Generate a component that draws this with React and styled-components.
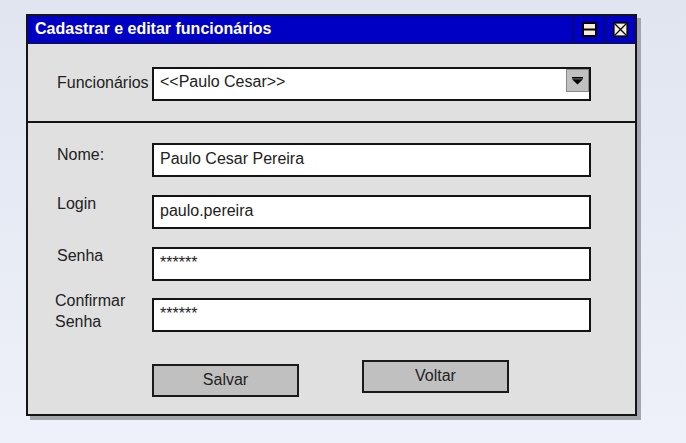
import React from "react";
import styled, { createGlobalStyle } from "styled-components";

const Global = createGlobalStyle`
  html, body { margin: 0; padding: 0; }
  body {
    width: 686px;
    height: 443px;
    overflow: hidden;
    background: linear-gradient(180deg, #e0e5f0 0%, #eef1f9 100%);
    font-family: "Liberation Sans", Arial, sans-serif;
  }
  * { box-sizing: border-box; }
`;

const Page = styled.div`
  padding: 14px 0 0 26px;
`;

const Window = styled.div`
  width: 611px;
  height: 402px;
  border: 2px solid #141414;
  background: #e0e0e0;
  box-shadow: 4px 4px 0 #a4a6ad;
  display: flex;
  flex-direction: column;
`;

const TitleBar = styled.div`
  height: 28px;
  flex-shrink: 0;
  background: #0000c4;
  border-bottom: 1px solid #141428;
  display: flex;
  align-items: stretch;
`;

const Title = styled.div`
  flex: 1;
  color: #fff;
  font-weight: bold;
  font-size: 16px;
  line-height: 26px;
  padding-left: 7px;
`;

const Control = styled.div`
  width: 31px;
  border-left: 1px solid #101030;
  display: flex;
  align-items: center;
  justify-content: center;
`;

const TopSection = styled.div`
  height: 79px;
  flex-shrink: 0;
  border-bottom: 2px solid #141414;
  display: flex;
  align-items: flex-start;
  padding: 23px 0 0 29px;
`;

const RowLabel = styled.div`
  width: 95px;
  flex-shrink: 0;
  font-size: 16px;
  color: #222;
  line-height: 18px;
  padding-top: ${(p) => p.$pt || 0}px;
`;

const ConfirmLabel = styled.div`
  width: 97px;
  flex-shrink: 0;
  margin-left: -2px;
  margin-top: -8px;
  font-size: 16px;
  color: #222;
  line-height: 21px;
`;

const Select = styled.div`
  position: relative;
  width: 439px;
  height: 34px;
  background: #fff;
  border: 2px solid #141414;
  font-size: 16px;
  color: #222;
  line-height: 18px;
  padding: 4px 0 0 6px;
`;

const DropButton = styled.div`
  position: absolute;
  top: 0;
  right: 0;
  width: 23px;
  height: 23px;
  background: #c0c0c0;
  border: 1px solid #8a8a8a;
  display: flex;
  align-items: center;
  justify-content: center;
`;

const Form = styled.div`
  flex: 1;
  padding: 20px 0 0 29px;
  display: flex;
  flex-direction: column;
`;

const FieldRow = styled.div`
  display: flex;
  align-items: flex-start;
  margin-bottom: ${(p) => p.$mb}px;
`;

const Field = styled.div`
  width: 439px;
  height: 34px;
  background: #fff;
  border: 2px solid #141414;
  font-size: 16px;
  color: #222;
  line-height: 18px;
  padding: 5px 0 0 6px;
`;

const Buttons = styled.div`
  display: flex;
  align-items: flex-start;
  gap: 63px;
  padding-left: 95px;
  margin-top: 32px;
`;

const Button = styled.div`
  width: 147px;
  height: 33px;
  background: #c0c0c0;
  border: 2px solid #1a1a1a;
  font-size: 16px;
  color: #222;
  line-height: 18px;
  text-align: center;
  padding-top: 5px;
  margin-top: ${(p) => p.$mt || 0}px;
`;

const RestoreIcon = () => (
  <svg width="15" height="15" viewBox="0 0 15 15">
    <rect x="1" y="1" width="13" height="13" fill="#fbeada" stroke="#000" strokeWidth="2" />
    <line x1="1" y1="7.5" x2="14" y2="7.5" stroke="#000" strokeWidth="2" />
  </svg>
);

const CloseIcon = () => (
  <svg width="15" height="15" viewBox="0 0 15 15">
    <rect x="0.8" y="0.8" width="13.4" height="13.4" fill="#f6ece0" stroke="#000" strokeWidth="1.6" />
    <line x1="1.5" y1="1.5" x2="13.5" y2="13.5" stroke="#000" strokeWidth="1.3" />
    <line x1="13.5" y1="1.5" x2="1.5" y2="13.5" stroke="#000" strokeWidth="1.3" />
  </svg>
);

const ArrowIcon = () => (
  <svg width="11" height="8" viewBox="0 0 11 8">
    <rect x="0" y="0" width="11" height="1.6" fill="#000" />
    <polygon points="0,2.2 11,2.2 5.5,7.5" fill="#000" />
  </svg>
);

export default function App() {
  return (
    <>
      <Global />
      <Page>
        <Window>
          <TitleBar>
            <Title>Cadastrar e editar funcionários</Title>
            <Control>
              <RestoreIcon />
            </Control>
            <Control>
              <CloseIcon />
            </Control>
          </TitleBar>
          <TopSection>
            <RowLabel $pt={7}>Funcionários</RowLabel>
            <Select>
              &lt;&lt;Paulo Cesar&gt;&gt;
              <DropButton>
                <ArrowIcon />
              </DropButton>
            </Select>
          </TopSection>
          <Form>
            <FieldRow $mb={18}>
              <RowLabel $pt={3}>Nome:</RowLabel>
              <Field>Paulo Cesar Pereira</Field>
            </FieldRow>
            <FieldRow $mb={18}>
              <RowLabel $pt={0}>Login</RowLabel>
              <Field>paulo.pereira</Field>
            </FieldRow>
            <FieldRow $mb={17}>
              <RowLabel $pt={-1}>Senha</RowLabel>
              <Field>******</Field>
            </FieldRow>
            <FieldRow $mb={0}>
              <ConfirmLabel>
                Confirmar
                <br />
                Senha
              </ConfirmLabel>
              <Field>******</Field>
            </FieldRow>
            <Buttons>
              <Button>Salvar</Button>
              <Button $mt={-4}>Voltar</Button>
            </Buttons>
          </Form>
        </Window>
      </Page>
    </>
  );
}
